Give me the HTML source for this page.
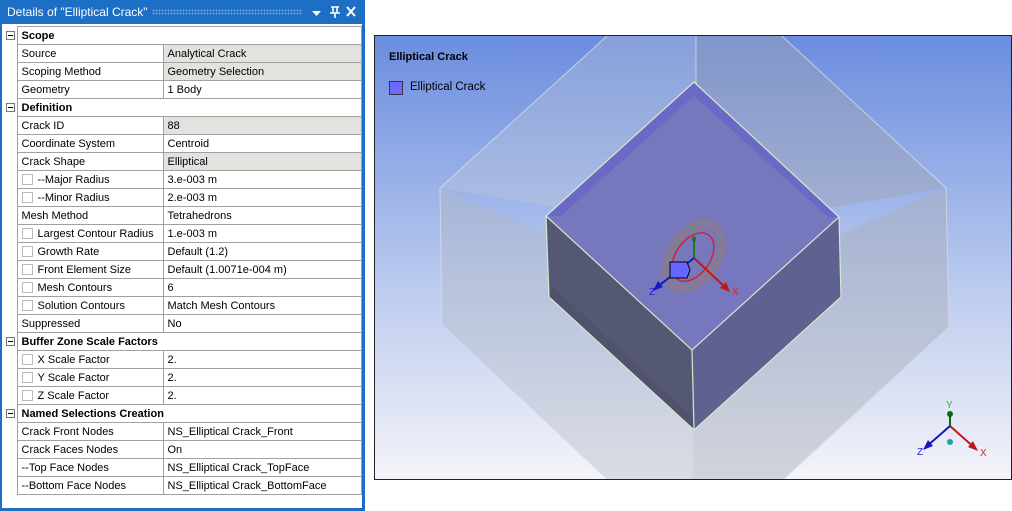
<!DOCTYPE html>
<html><head><meta charset="utf-8"><style>
*{margin:0;padding:0;box-sizing:border-box}
body{width:1012px;height:511px;background:#fff;position:relative;overflow:hidden;font-family:"Liberation Sans",sans-serif;font-size:11px;color:#000}
#panel{position:absolute;left:0;top:0;width:365px;height:511px;background:#1c6fc4;}
#title{position:absolute;left:0;top:0;width:365px;height:24px;color:#fff;font-size:12px;line-height:24px;padding-left:7px}
#dots{position:absolute;left:152px;top:9px;width:150px;height:6px;background-image:radial-gradient(circle,#6ea4dc 0.8px,transparent 1px);background-size:3px 3px}
#inner{position:absolute;left:2px;top:24px;width:360px;height:484px;background:#fff}
table{position:absolute;left:3px;top:26px;border-collapse:collapse;width:358px;table-layout:fixed}
td{height:18px;border:1px solid #a0a0a0;padding:0 0 0 4px;white-space:nowrap;overflow:hidden;line-height:16px}
td.pm{border:none;padding:0}
tr.h td.l{font-weight:bold}
.g{background:#e4e2de}
.box{display:inline-block;width:11px;height:11px;border:1px solid #bbb;vertical-align:-2px;margin-right:5px}
.mn{display:block;width:9px;height:9px;border:1px solid #777;margin-left:3px;position:relative}
.mn:after{content:"";position:absolute;left:1px;top:3px;width:5px;height:1px;background:#000}
#vp{position:absolute;left:374px;top:35px;width:638px;height:445px;border:1px solid #222}
</style></head><body>
<div id="panel">
<div id="title">Details of "Elliptical Crack"</div>
<div id="dots"></div>
<svg style="position:absolute;left:308px;top:4px" width="56" height="16">
<path d="M4 7h9l-4.5 5z" fill="#fff"/>
<path d="M23 3h8M25 3v6h4V3M22 9h10M27 9v5" stroke="#fff" stroke-width="1.6" fill="none"/>
<path d="M39 3l8 9M47 3l-8 9" stroke="#fff" stroke-width="2"/>
</svg>
<div id="inner"></div>
<table>
<colgroup><col style="width:14px"><col style="width:146px"><col style="width:198px"></colgroup>
<tr class="h"><td class="pm"><span class="mn"></span></td><td class="l" colspan="2">Scope</td></tr>
<tr><td class="pm"></td><td>Source</td><td class="g">Analytical Crack</td></tr>
<tr><td class="pm"></td><td>Scoping Method</td><td class="g">Geometry Selection</td></tr>
<tr><td class="pm"></td><td>Geometry</td><td>1 Body</td></tr>
<tr class="h"><td class="pm"><span class="mn"></span></td><td class="l" colspan="2">Definition</td></tr>
<tr><td class="pm"></td><td>Crack ID</td><td class="g">88</td></tr>
<tr><td class="pm"></td><td>Coordinate System</td><td>Centroid</td></tr>
<tr><td class="pm"></td><td>Crack Shape</td><td class="g">Elliptical</td></tr>
<tr><td class="pm"></td><td><span class="box"></span>--Major Radius</td><td>3.e-003 m</td></tr>
<tr><td class="pm"></td><td><span class="box"></span>--Minor Radius</td><td>2.e-003 m</td></tr>
<tr><td class="pm"></td><td>Mesh Method</td><td>Tetrahedrons</td></tr>
<tr><td class="pm"></td><td><span class="box"></span>Largest Contour Radius</td><td>1.e-003 m</td></tr>
<tr><td class="pm"></td><td><span class="box"></span>Growth Rate</td><td>Default (1.2)</td></tr>
<tr><td class="pm"></td><td><span class="box"></span>Front Element Size</td><td>Default (1.0071e-004 m)</td></tr>
<tr><td class="pm"></td><td><span class="box"></span>Mesh Contours</td><td>6</td></tr>
<tr><td class="pm"></td><td><span class="box"></span>Solution Contours</td><td>Match Mesh Contours</td></tr>
<tr><td class="pm"></td><td>Suppressed</td><td>No</td></tr>
<tr class="h"><td class="pm"><span class="mn"></span></td><td class="l" colspan="2">Buffer Zone Scale Factors</td></tr>
<tr><td class="pm"></td><td><span class="box"></span>X Scale Factor</td><td>2.</td></tr>
<tr><td class="pm"></td><td><span class="box"></span>Y Scale Factor</td><td>2.</td></tr>
<tr><td class="pm"></td><td><span class="box"></span>Z Scale Factor</td><td>2.</td></tr>
<tr class="h"><td class="pm"><span class="mn"></span></td><td class="l" colspan="2">Named Selections Creation</td></tr>
<tr><td class="pm"></td><td>Crack Front Nodes</td><td>NS_Elliptical Crack_Front</td></tr>
<tr><td class="pm"></td><td>Crack Faces Nodes</td><td>On</td></tr>
<tr><td class="pm"></td><td>--Top Face Nodes</td><td>NS_Elliptical Crack_TopFace</td></tr>
<tr><td class="pm"></td><td>--Bottom Face Nodes</td><td>NS_Elliptical Crack_BottomFace</td></tr>
</table>
</div>
<div id="vp">
<svg width="636" height="443" viewBox="375 36 636 443" style="position:absolute;left:0;top:0">
<defs><linearGradient id="bg" x1="0" y1="0" x2="0" y2="1"><stop offset="0" stop-color="#6b8ddf"/><stop offset="0.55" stop-color="#b9c9ee"/><stop offset="1" stop-color="#f4f4f9"/></linearGradient></defs>
<rect x="375" y="36" width="636" height="443" fill="url(#bg)"/>
<polygon points="607,36 696,36 696,230 440,188" fill="#c8ccd4" opacity="0.3"/>
<polygon points="696,36 782,36 946,188 696,230" fill="#a0a2ac" opacity="0.4"/>
<polygon points="440,188 442,325 607,479 692,479 692,300" fill="#b4b8c4" opacity="0.4"/>
<polygon points="946,188 949,327 784,479 692,479 692,300" fill="#a8acb8" opacity="0.45"/>
<path d="M607,36 L440,188 L442,325 L607,479 M782,36 L946,188 L949,327 L784,479 M692,348 V479 M696,36 V90" stroke="#d8dce6" stroke-width="1" fill="none" opacity="0.8"/>
<polygon points="546,216 692,350 694,430 549,297" fill="#555873"/>
<polygon points="692,350 839,217 841,297 694,430" fill="#5f6190"/>
<polygon points="549,297 694,430 694,418 552,286" fill="#4c4e6a" opacity="0.6"/>
<polygon points="694,82 839,217 692,350 546,216" fill="#7677bd"/>
<polygon points="694,82 839,217 828,217 694,96 561,216 546,216" fill="#6a6ac6"/>
<path d="M546,216 L694,82 L839,217 L692,350 Z M692,350 L694,430 M546,216 L549,297 L694,430 L841,297 L839,217" stroke="#d8e6d0" stroke-width="1.2" fill="none"/>
<ellipse cx="694" cy="256" rx="23" ry="36" transform="rotate(35 694 256)" fill="none" stroke="#8a7a90" stroke-width="9" opacity="0.8"/>
<ellipse cx="693" cy="257" rx="17" ry="27" transform="rotate(35 693 257)" fill="none" stroke="#e01818" stroke-width="1.3"/>
<line x1="694" y1="258" x2="694" y2="240" stroke="#1a7a1a" stroke-width="2"/>
<ellipse cx="694" cy="239" rx="2" ry="3" fill="#1a7a1a"/>
<line x1="694" y1="258" x2="728" y2="290" stroke="#c01818" stroke-width="2"/>
<polygon points="730,292 720,288 726,282" fill="#c01818"/>
<line x1="694" y1="258" x2="656" y2="288" stroke="#1818c0" stroke-width="2"/>
<polygon points="653,291 658,281 663,287" fill="#1818c0"/>
<polygon points="670,262 687,262 690,270 687,278 670,278" fill="#6666ff" stroke="#000" stroke-width="1"/>
<text x="690" y="232" fill="#20c020" font-size="9">Y</text>
<text x="732" y="295" fill="#e02020" font-size="10">X</text>
<text x="649" y="295" fill="#2020e0" font-size="10">Z</text>
<line x1="950" y1="426" x2="950" y2="412" stroke="#116611" stroke-width="2"/>
<circle cx="950" cy="414" r="3" fill="#116611"/>
<line x1="950" y1="426" x2="976" y2="449" stroke="#c01818" stroke-width="2"/>
<polygon points="978,451 968,447 973,441" fill="#c01818"/>
<line x1="950" y1="426" x2="926" y2="447" stroke="#1818c0" stroke-width="2"/>
<polygon points="923,450 928,440 933,446" fill="#1818c0"/>
<circle cx="950" cy="442" r="3" fill="#20a0b0"/>
<text x="946" y="408" fill="#20c020" font-size="10">Y</text>
<text x="980" y="456" fill="#e02020" font-size="10">X</text>
<text x="917" y="455" fill="#2020e0" font-size="10">Z</text>
</svg>
<div style="position:absolute;left:14px;top:15px;font-weight:bold;font-size:11px">Elliptical Crack</div>
<div style="position:absolute;left:14px;top:45px;width:14px;height:14px;background:#6a6aff;border:1px solid #334"></div>
<div style="position:absolute;left:35px;top:45px;font-size:11.5px">Elliptical Crack</div>
</div>
</body></html>
